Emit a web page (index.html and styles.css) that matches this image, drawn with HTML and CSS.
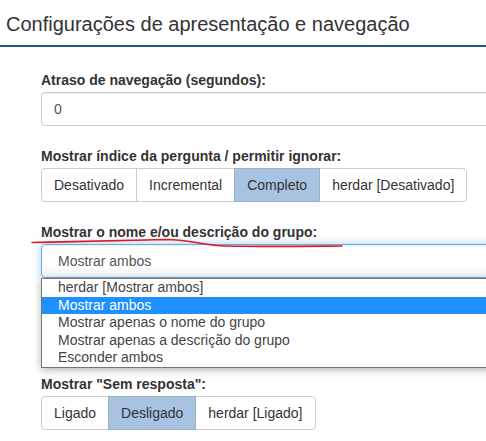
FILE: index.html
```html
<!DOCTYPE html>
<html>
<head>
<meta charset="utf-8">
<link rel="stylesheet" href="styles.css">
</head>
<body>
<div class="page">
  <h3 class="title">Configurações de apresentação e navegação</h3>
  <div class="form">
    <div class="group">
      <label class="lbl">Atraso de navegação (segundos):</label>
      <div class="control">0</div>
    </div>
    <div class="group">
      <label class="lbl">Mostrar índice da pergunta / permitir ignorar:</label>
      <div class="btn-group">
        <span class="btn">Desativado</span><span class="btn">Incremental</span><span class="btn active">Completo</span><span class="btn">herdar [Desativado]</span>
      </div>
    </div>
    <div class="group group-select">
      <label class="lbl">Mostrar o nome e/ou descrição do grupo:</label>
      <div class="control select">Mostrar ambos</div>
      <ul class="dropdown">
        <li>herdar [Mostrar ambos]</li>
        <li class="sel">Mostrar ambos</li>
        <li>Mostrar apenas o nome do grupo</li>
        <li>Mostrar apenas a descrição do grupo</li>
        <li>Esconder ambos</li>
      </ul>
    </div>
    <div class="group">
      <label class="lbl">Mostrar "Sem resposta":</label>
      <div class="btn-group">
        <span class="btn">Ligado</span><span class="btn active">Desligado</span><span class="btn">herdar [Ligado]</span>
      </div>
    </div>
  </div>
  <svg class="scribble" width="486" height="441" viewBox="0 0 486 441">
    <path d="M32 242.5 C 80 241.5, 130 240, 167 239.5 C 185 239.5, 195 243, 217 245.5 C 240 247, 280 246.5, 342 246" fill="none" stroke="#e5161c" stroke-width="1.6" stroke-linecap="round"/>
  </svg>
</div>
</body>
</html>
```
FILE: styles.css
```css
html, body {
  margin: 0;
  padding: 0;
  background: #fff;
}
body {
  font-family: "Liberation Sans", Arial, sans-serif;
  font-size: 14px;
  color: #333;
  overflow: hidden;
}
.page {
  position: relative;
  width: 486px;
  height: 441px;
  overflow: hidden;
}
.title {
  margin: 0;
  padding: 13px 0 10px 6px;
  font-size: 20px;
  line-height: 22px;
  font-weight: normal;
  color: #333;
  border-bottom: 2px solid #22558a;
}
.form {
  padding: 23px 0 0 41px;
  width: 520px;
}
.group {
  margin-bottom: 20px;
  position: relative;
}
.group-select {
  margin-bottom: 96px;
}
.lbl {
  display: block;
  font-weight: bold;
  line-height: 20px;
  margin-bottom: 2px;
  color: #333;
}
.control {
  box-sizing: border-box;
  height: 34px;
  padding: 6px 12px;
  line-height: 20px;
  border: 1px solid #ccc;
  border-radius: 4px;
  color: #555;
  box-shadow: inset 0 1px 1px rgba(0,0,0,.075);
}
.select {
  padding-left: 16px;
  border-color: #66afe9;
  box-shadow: inset 0 1px 1px rgba(0,0,0,.075), 0 0 8px rgba(102,175,233,.6);
  background: linear-gradient(#fff 60%, #f1f1f1);
}
.btn-group {
  display: inline-flex;
}
.btn {
  display: block;
  padding: 6px 12px;
  line-height: 20px;
  border: 1px solid #ccc;
  margin-left: -1px;
  background: #fff;
  color: #333;
}
.btn:first-child {
  margin-left: 0;
  border-radius: 4px 0 0 4px;
}
.btn:last-child {
  border-radius: 0 4px 4px 0;
}
.btn.active {
  background: #a7c3e1;
  border-color: #99b1c9;
  position: relative;
}
.dropdown {
  position: absolute;
  left: 0;
  top: 56px;
  width: 480px;
  margin: 0;
  padding: 0;
  list-style: none;
  background: #fff;
  border: 1px solid #767676;
  box-shadow: 0 2px 8px rgba(0,0,0,.3);
  z-index: 2;
}
.dropdown li {
  height: 17.6px;
  line-height: 17.6px;
  padding-left: 16px;
  color: #444;
  font-size: 14px;
}
.dropdown li.sel {
  background: #1e90ff;
  color: #fff;
}
.scribble {
  position: absolute;
  left: 0;
  top: 0;
  pointer-events: none;
  z-index: 3;
}
```
